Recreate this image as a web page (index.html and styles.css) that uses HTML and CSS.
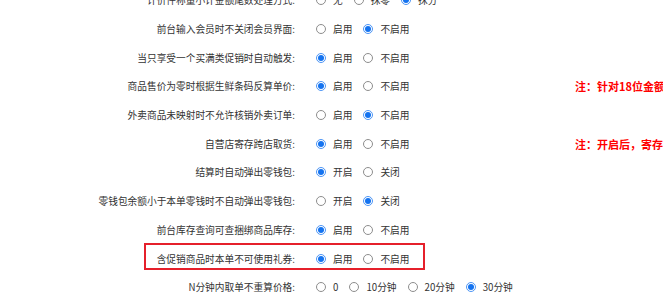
FILE: index.html
```html
<!DOCTYPE html>
<html lang="zh-CN">
<head>
    <meta charset="UTF-8">
    <title>参数设置</title>
    <link rel="stylesheet" href="styles.css">
</head>
<body>
    <div class="settings">
        <div class="row">
            <div class="label">计价件称量小计金额尾数处理方式:</div>
            <div class="options">
                <span class="radio"></span><span class="opt">无</span>
                <span class="radio"></span><span class="opt">抹零</span>
                <span class="radio on"></span><span class="opt">抹分</span>
            </div>
        </div>
        <div class="row">
            <div class="label">前台输入会员时不关闭会员界面:</div>
            <div class="options">
                <span class="radio"></span><span class="opt">启用</span>
                <span class="radio on"></span><span class="opt">不启用</span>
            </div>
        </div>
        <div class="row">
            <div class="label">当只享受一个买满类促销时自动触发:</div>
            <div class="options">
                <span class="radio on"></span><span class="opt">启用</span>
                <span class="radio"></span><span class="opt">不启用</span>
            </div>
        </div>
        <div class="row">
            <div class="label">商品售价为零时根据生鲜条码反算单价:</div>
            <div class="options">
                <span class="radio on"></span><span class="opt">启用</span>
                <span class="radio"></span><span class="opt">不启用</span>
            </div>
            <div class="note">注：针对18位金额条码</div>
        </div>
        <div class="row">
            <div class="label">外卖商品未映射时不允许核销外卖订单:</div>
            <div class="options">
                <span class="radio"></span><span class="opt">启用</span>
                <span class="radio on"></span><span class="opt">不启用</span>
            </div>
        </div>
        <div class="row">
            <div class="label">自营店寄存跨店取货:</div>
            <div class="options">
                <span class="radio on"></span><span class="opt">启用</span>
                <span class="radio"></span><span class="opt">不启用</span>
            </div>
            <div class="note">注：开启后，寄存的</div>
        </div>
        <div class="row">
            <div class="label">结算时自动弹出零钱包:</div>
            <div class="options">
                <span class="radio on"></span><span class="opt">开启</span>
                <span class="radio"></span><span class="opt">关闭</span>
            </div>
        </div>
        <div class="row">
            <div class="label">零钱包余额小于本单零钱时不自动弹出零钱包:</div>
            <div class="options">
                <span class="radio"></span><span class="opt">开启</span>
                <span class="radio on"></span><span class="opt">关闭</span>
            </div>
        </div>
        <div class="row">
            <div class="label">前台库存查询可查捆绑商品库存:</div>
            <div class="options">
                <span class="radio on"></span><span class="opt">启用</span>
                <span class="radio"></span><span class="opt">不启用</span>
            </div>
        </div>
        <div class="row marked">
            <div class="label">含促销商品时本单不可使用礼券:</div>
            <div class="options">
                <span class="radio on"></span><span class="opt">启用</span>
                <span class="radio"></span><span class="opt">不启用</span>
            </div>
            <div class="highlight"></div>
        </div>
        <div class="row">
            <div class="label">N分钟内取单不重算价格:</div>
            <div class="options">
                <span class="radio"></span><span class="opt">0</span>
                <span class="radio"></span><span class="opt">10分钟</span>
                <span class="radio"></span><span class="opt">20分钟</span>
                <span class="radio on"></span><span class="opt">30分钟</span>
            </div>
        </div>
    </div>
</body>
</html>
```

FILE: styles.css
```css
body {
    margin: 0;
    background: #fff;
    font-family: "Noto Sans CJK SC", "Microsoft YaHei", sans-serif;
    font-size: 9.7px;
    color: #333;
    overflow: hidden;
    white-space: nowrap;
}

.settings {
    margin-top: -14px;
}

/* one setting per row */
.row {
    position: relative;
    height: 28.7px;
    display: grid;
    grid-template-columns: 297px 278px 88px;
    align-items: center;
}

.label {
    text-align: right;
    padding-right: 2px;
}

.options {
    display: flex;
    align-items: center;
    padding-left: 19px;
}

.opt {
    margin-right: 11px;
}

/* radio circles */
.radio {
    box-sizing: border-box;
    width: 10px;
    height: 10px;
    border: 1px solid #8d8d8d;
    border-radius: 50%;
    margin-right: 7px;
    background: #fff;
    display: flex;
    align-items: center;
    justify-content: center;
}

.radio.on {
    border-color: #4d95f5;
}

.radio.on::after {
    content: "";
    width: 6px;
    height: 6px;
    border-radius: 50%;
    background: #1473f0;
}

.note {
    color: #f00;
    font-weight: bold;
    font-size: 11px;
    overflow: hidden;
}

/* red box drawn over the row */
.highlight {
    position: absolute;
    left: 144px;
    top: -1px;
    width: 281px;
    height: 27px;
    box-sizing: border-box;
    border: 2px solid #e5202b;
}
```
